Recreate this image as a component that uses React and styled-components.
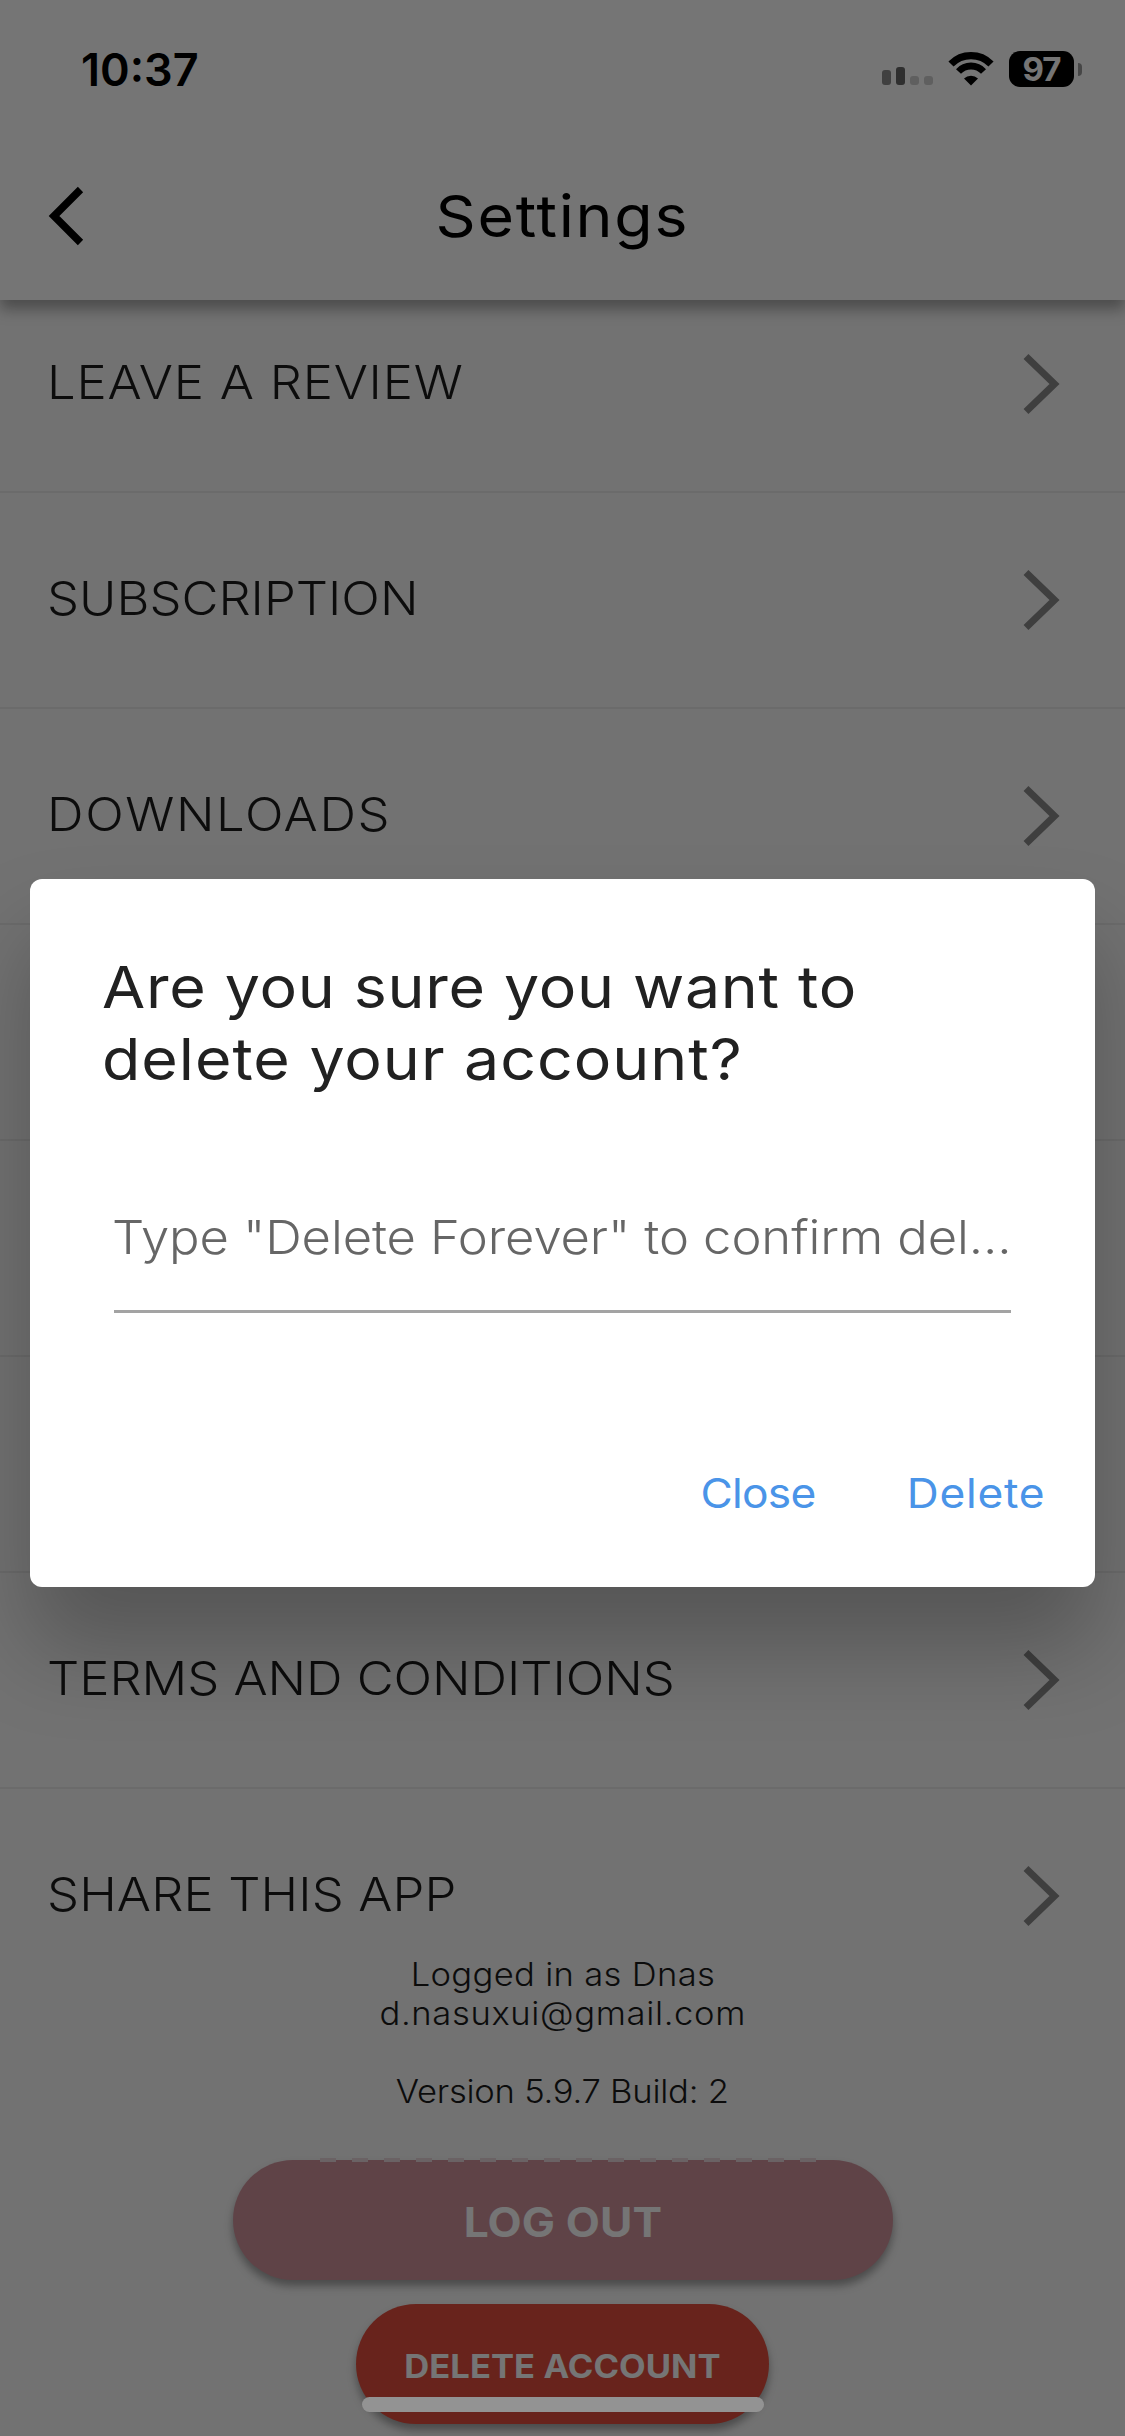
import React from 'react'
import styled, { createGlobalStyle } from 'styled-components'

const GlobalStyle = createGlobalStyle`
  * {
    box-sizing: border-box;
  }

  body {
    margin: 0;
    font-family: Inter, 'Liberation Sans', sans-serif;
    font-kerning: normal;
  }
`

// Inter stretched a little to get the wide geometric look
const WideText = styled.span`
  display: inline-block;
  white-space: nowrap;
  transform: scaleX(1.08);
  transform-origin: ${({ $origin }) => $origin || 'left'} center;
  letter-spacing: ${({ $spacing }) => $spacing || 0}px;
`

const Screen = styled.div`
  position: relative;
  width: 1125px;
  height: 2436px;
  overflow: hidden;
  display: flex;
  flex-direction: column;
  background: #f8f8f8;
`

const Header = styled.header`
  position: relative;
  z-index: 1;
  flex: none;
  height: 300px;
  background: #ffffff;
  box-shadow: 0 9px 14px rgba(0, 0, 0, 0.34);
`

const StatusBar = styled.div`
  height: 132px;
  padding: 6px 43px 0 81px;
  display: flex;
  align-items: center;
  justify-content: space-between;
`

const Time = styled.span`
  font-size: 45px;
  font-weight: 600;
`

const StatusIcons = styled.div`
  display: flex;
  align-items: center;
`

const Signal = styled.svg`
  width: 51px;
  height: 36px;
  margin-right: 15px;
`

const Wifi = styled.svg`
  width: 46px;
  height: 36px;
  margin-right: 15px;
`

const Battery = styled.div`
  width: 65px;
  height: 36px;
  border-radius: 11px;
  background: #000000;
  color: #ffffff;
  font-size: 33px;
  font-weight: 700;
  line-height: 37px;
  letter-spacing: -1px;
  text-align: center;
`

const BatteryTip = styled.div`
  width: 4px;
  height: 13px;
  margin-left: 4px;
  border-radius: 0 5px 5px 0;
  background: #9a9a9a;
`

const TitleBar = styled.div`
  height: 168px;
  padding: 0 48px;
  display: grid;
  grid-template-columns: 120px 1fr 120px;
  align-items: center;
`

const BackIcon = styled.svg`
  width: 36px;
  height: 60px;
`

const Title = styled.h1`
  margin: 0;
  text-align: center;
  font-size: 58px;
  font-weight: 400;
`

const List = styled.div`
  flex: none;
  margin-top: -23px;
`

const Row = styled.div`
  height: 216px;
  padding: 0 65px 0 47px;
  display: flex;
  align-items: center;
  justify-content: space-between;
  border-bottom: 2px solid ${({ $last }) => ($last ? 'transparent' : '#e9e9e9')};
`

const RowLabel = styled.div`
  padding-bottom: 5px;
  font-size: 47px;
  font-weight: 300;
  color: #1c1c1c;
`

const RowIcon = styled.svg`
  width: 37px;
  height: 62px;
`

const Account = styled.div`
  flex: none;
  margin-top: -50px;
  text-align: center;
  font-size: 32px;
  font-weight: 300;
  line-height: 39px;
  color: #1c1c1c;
`

const AccountLine = styled.div`
  height: 39px;
`

const Actions = styled.div`
  flex: none;
  padding-top: 49px;
  display: flex;
  flex-direction: column;
  align-items: center;
  gap: 24px;
`

const PillButton = styled.button`
  position: relative;
  width: ${({ $width }) => $width}px;
  height: 120px;
  padding: 4px 0 0;
  border: 0;
  border-radius: 60px;
  background: ${({ $color }) => $color};
  box-shadow: 0 6px 9px rgba(0, 0, 0, 0.35);
  color: #ffffff;
  font-family: inherit;
  font-size: ${({ $size }) => $size}px;
  font-weight: 700;
`

const DashedEdge = styled.span`
  position: absolute;
  top: -2px;
  left: 87px;
  width: 497px;
  height: 4px;
  background: repeating-linear-gradient(90deg, #e8d6d9 0 16px, transparent 16px 32px);
`

const Scrim = styled.div`
  position: absolute;
  z-index: 2;
  inset: 0;
  padding: 30px;
  display: flex;
  align-items: center;
  justify-content: center;
  background: rgba(0, 0, 0, 0.54);
`

const Dialog = styled.div`
  width: 1065px;
  height: 708px;
  margin-top: 30px;
  padding: 72px 50px 0 72px;
  display: flex;
  flex-direction: column;
  border-radius: 12px;
  background: #ffffff;
  box-shadow: 0 60px 90px rgba(0, 0, 0, 0.25);
`

const DialogTitle = styled.h2`
  margin: 0;
  display: flex;
  flex-direction: column;
  align-items: flex-start;
  font-size: 58px;
  font-weight: 400;
  line-height: 72px;
  color: #212121;
`

const Field = styled.div`
  width: 897px;
  height: 101px;
  margin: 117px 0 0 12px;
  border-bottom: 3px solid #a3a3a3;
  font-size: 47px;
  font-weight: 300;
  line-height: 50px;
  text-indent: -1px;
  color: #666666;
`

const DialogActions = styled.div`
  margin-top: 153px;
  display: flex;
  justify-content: flex-end;
  gap: 101px;
`

const TextButton = styled.button`
  padding: 0;
  border: 0;
  background: none;
  font-family: inherit;
  font-size: 41px;
  font-weight: 400;
  line-height: 54px;
  color: #4a94e8;
`

const HomeIndicator = styled.div`
  position: absolute;
  z-index: 3;
  left: 362px;
  bottom: 24px;
  width: 402px;
  height: 15px;
  border-radius: 8px;
  background: #939393;
`

const rows = [
  { label: 'LEAVE A REVIEW', spacing: 0.7 },
  { label: 'SUBSCRIPTION', spacing: 0 },
  { label: 'DOWNLOADS', spacing: 1.5 },
  { label: '' },
  { label: '' },
  { label: '' },
  { label: 'TERMS AND CONDITIONS', spacing: -0.05 },
  { label: 'SHARE THIS APP', spacing: 0.1 },
]

const accountLines = [
  { text: 'Logged in as Dnas', spacing: 0.3 },
  { text: 'd.nasuxui@gmail.com', spacing: 0.6 },
  { text: '' },
  { text: 'Version 5.9.7 Build: 2', spacing: -0.22 },
]

const App = () => (
  <>
    <GlobalStyle />
    <Screen>
      <Header>
        <StatusBar>
          <Time>10:37</Time>
          <StatusIcons>
            <Signal viewBox="0 0 51 36">
              <rect x="0" y="19" width="9" height="15" rx="3" fill="#8c8c8c" />
              <rect x="14" y="16" width="9" height="18" rx="3" fill="#666666" />
              <rect x="28" y="25" width="9" height="9" rx="3" fill="#d0d0d0" />
              <rect x="42" y="25" width="9" height="9" rx="3" fill="#d0d0d0" />
            </Signal>
            <Wifi viewBox="0 0 46 36">
              <path d="M3 13 A28 28 0 0 1 43 13" fill="none" stroke="#000" strokeWidth="7.2" />
              <path d="M10.5 20.5 A17 17 0 0 1 35.5 20.5" fill="none" stroke="#000" strokeWidth="6.8" />
              <path d="M23 34.5 L16 27.5 A10 10 0 0 1 30 27.5 Z" />
            </Wifi>
            <Battery>97</Battery>
            <BatteryTip />
          </StatusIcons>
        </StatusBar>
        <TitleBar>
          <BackIcon viewBox="0 0 36 60">
            <path d="M32.5 3.5 L6 30 L32.5 56.5" fill="none" stroke="#000" strokeWidth="7.5" />
          </BackIcon>
          <Title>
            <WideText $origin="center" $spacing={1.6}>
              Settings
            </WideText>
          </Title>
        </TitleBar>
      </Header>
      <List>
        {rows.map(({ label, spacing }, i) => (
          <Row key={i} $last={i === rows.length - 1}>
            <RowLabel>
              <WideText $spacing={spacing}>{label}</WideText>
            </RowLabel>
            <RowIcon viewBox="0 0 37 62">
              <path d="M3 3.5 L31.5 31 L3 58.5" fill="none" stroke="#8a8a8a" strokeWidth="7" />
            </RowIcon>
          </Row>
        ))}
      </List>
      <Account>
        {accountLines.map(({ text, spacing }, i) => (
          <AccountLine key={i}>
            <WideText $origin="center" $spacing={spacing}>
              {text}
            </WideText>
          </AccountLine>
        ))}
      </Account>
      <Actions>
        <PillButton $width={660} $color="#d0929b" $size={41}>
          <DashedEdge />
          <WideText $origin="center" $spacing={0.1}>
            LOG OUT
          </WideText>
        </PillButton>
        <PillButton $width={413} $color="#e24d3d" $size={32}>
          <WideText $origin="center" $spacing={0.05}>
            DELETE ACCOUNT
          </WideText>
        </PillButton>
      </Actions>
      <Scrim>
        <Dialog>
          <DialogTitle>
            <WideText $spacing={0.65}>Are you sure you want to</WideText>
            <WideText $spacing={0.9}>delete your account?</WideText>
          </DialogTitle>
          <Field>
            <WideText $spacing={-0.1}>Type "Delete Forever" to confirm del...</WideText>
          </Field>
          <DialogActions>
            <TextButton>
              <WideText $origin="right" $spacing={-0.7}>
                Close
              </WideText>
            </TextButton>
            <TextButton>
              <WideText $origin="right" $spacing={0.7}>
                Delete
              </WideText>
            </TextButton>
          </DialogActions>
        </Dialog>
      </Scrim>
      <HomeIndicator />
    </Screen>
  </>
)

export default App
